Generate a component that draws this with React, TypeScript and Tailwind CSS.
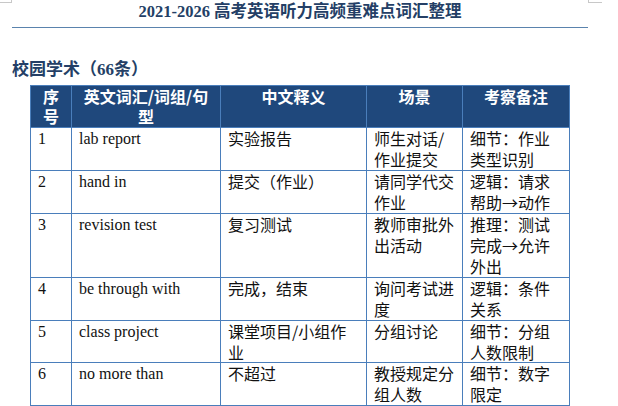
const rows = [
  { no: '1', en: 'lab report', cn: '实验报告', scene: '师生对话/作业提交', note: '细节：作业类型识别', h: 'h-[43px]' },
  { no: '2', en: 'hand in', cn: '提交（作业）', scene: '请同学代交作业', note: '逻辑：请求帮助→动作', h: 'h-[43px]' },
  { no: '3', en: 'revision test', cn: '复习测试', scene: '教师审批外出活动', note: '推理：测试完成→允许外出', h: 'h-[64px]' },
  { no: '4', en: 'be through with', cn: '完成，结束', scene: '询问考试进度', note: '逻辑：条件关系', h: 'h-[43px]' },
  { no: '5', en: 'class project', cn: '课堂项目/小组作业', scene: '分组讨论', note: '细节：分组人数限制', h: 'h-[42px]' },
  { no: '6', en: 'no more than', cn: '不超过', scene: '教授规定分组人数', note: '细节：数字限定', h: 'h-[43px]' },
]

const font = "font-['Liberation_Serif','Noto_Sans_CJK_SC',serif]"
const cjk = "font-['Noto_Sans_CJK_SC','Liberation_Serif',sans-serif]"
const cols = 'grid grid-cols-[41px_149px_146px_96px_107px]'
const cell = 'border-r border-[#4a7ebb] pl-[7px] pr-[6px]'

export default function App() {
  return (
    <div className={`relative w-[618px] h-[406px] overflow-hidden bg-white ${font}`}>
      {/* page corner marks */}
      <div className="absolute left-0 top-0 w-[12px] h-[3px] border-b border-r border-[#c8c8c8]" />
      <div className="absolute left-[588px] top-0 w-[14px] h-[3px] border-b border-l border-[#c8c8c8]" />

      {/* Title */}
      <div className="mx-[12px] w-[576px] h-[28px] border-b border-[#5a83ad] flex justify-center pt-[1px]">
        <h1 className="text-[16.5px] leading-[22px] font-bold text-[#243f66]">
          2021-2026 高考英语听力高频重难点词汇整理
        </h1>
      </div>

      {/* Section heading */}
      <h2 className="mt-[30px] ml-[12px] h-[27px] text-[17px] leading-[24px] font-bold text-[#243f66]">
        校园学术（66条）
      </h2>

      {/* Table */}
      <div className="ml-[30px] w-[540px] border-l border-t border-[#4a7ebb] text-[16px] leading-[21px] text-[#111]">
        <div className={`${cols} h-[42px] border-b border-[#4a7ebb] bg-[#1f487c] text-white font-bold text-center leading-[20px] ${cjk}`}>
          <div className="border-r border-[#4a7ebb] px-[4px]">序<br />号</div>
          <div className="border-r border-[#4a7ebb] px-[6px]">
            英文词汇/词组/句
            <br />
            型
          </div>
          <div className="border-r border-[#4a7ebb] px-[6px]">中文释义</div>
          <div className="border-r border-[#4a7ebb] px-[6px]">场景</div>
          <div className="border-r border-[#4a7ebb] px-[6px]">考察备注</div>
        </div>

        {rows.map((r) => (
          <div key={r.no} className={`${cols} ${r.h} border-b border-[#4a7ebb]`}>
            <div className={cell}>{r.no}</div>
            <div className={cell}>{r.en}</div>
            <div className={`${cell} break-all ${cjk}`}>{r.cn}</div>
            <div className={`${cell} break-all ${cjk}`}>{r.scene}</div>
            <div className={`${cell} pr-[8px] break-all ${cjk}`}>{r.note}</div>
          </div>
        ))}
      </div>
    </div>
  )
}
